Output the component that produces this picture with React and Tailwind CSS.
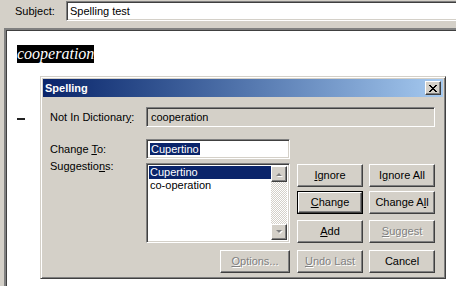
const raised =
  'border border-t-white border-l-white border-r-[#404040] border-b-[#404040] shadow-[inset_-1px_-1px_#808080,inset_1px_1px_#d4d0c8]';
const sunken =
  'border border-t-[#808080] border-l-[#808080] border-r-white border-b-white shadow-[inset_1px_1px_#404040,inset_-1px_-1px_#d4d0c8]';
const dim = 'text-[#808080] [text-shadow:1px_1px_0_#fff]';

function Btn({ children, disabled, isDefault, className = '' }) {
  const face = (
    <div className={`h-full w-full bg-[#d4d0c8] flex items-center justify-center ${raised} ${disabled ? dim : ''}`}>
      {children}
    </div>
  );
  if (isDefault) {
    return <div className={`h-[23px] border border-black ${className}`}>{face}</div>;
  }
  return <div className={`h-[23px] ${className}`}>{face}</div>;
}

function Arrow({ up }) {
  return (
    <div className={`w-[16px] h-[16px] bg-[#d4d0c8] flex items-center justify-center ${raised}`}>
      <svg width="8" height="5" viewBox="0 0 8 5">
        {up ? (
          <>
            <path d="M2 5 L5 2 L8 5 Z" fill="#fff" />
            <path d="M1 4 L4 1 L7 4 Z" fill="#808080" />
          </>
        ) : (
          <>
            <path d="M2 1 L5 4 L8 1 Z" fill="#fff" />
            <path d="M1 0 L4 3 L7 0 Z" fill="#808080" />
          </>
        )}
      </svg>
    </div>
  );
}

function CloseGlyph() {
  const rows = [[0, 2, 6, 2], [1, 2, 5, 2], [2, 4], [3, 2], [2, 4], [1, 2, 5, 2], [0, 2, 6, 2]];
  return (
    <svg width="8" height="7" viewBox="0 0 8 7" shapeRendering="crispEdges">
      {rows.map((r, y) => (
        <g key={y}>
          <rect x={r[0]} y={y} width={r[1]} height="1" fill="#000" />
          {r.length > 2 && <rect x={r[2]} y={y} width={r[3]} height="1" fill="#000" />}
        </g>
      ))}
    </svg>
  );
}

export default function App() {
  return (
    <div className="relative w-[456px] h-[286px] overflow-hidden bg-[#d4d0c8] font-['Liberation_Sans',Arial,sans-serif] text-[11px] text-black leading-[13px]">
      {/* subject bar */}
      <div className="h-[28px] flex items-start pt-[1px]">
        <div className="w-[66px] pl-[15px] h-[20px] flex items-center">Subject:</div>
        <div className={`flex-1 -mr-[4px] h-[20px] bg-white flex items-center pl-[3px] ${sunken}`}>Spelling test</div>
      </div>

      {/* document */}
      <div className="ml-[4px] h-[258px] bg-white border-t-2 border-l-2 border-[#808080] shadow-[inset_1px_1px_#404040]">
        <div className="pl-[11px] pt-[15px]">
          <div className="inline-block bg-black text-white italic font-['Liberation_Serif',serif] text-[16px] leading-[18px] w-[77px]">
            cooperation
          </div>
          <div className="mt-[55px] w-[8px] h-[2px] bg-[#222]" />
        </div>
      </div>

      {/* spelling dialog */}
      <div className="absolute left-[40px] top-[76px] w-[406px] h-[203px] bg-[#d4d0c8] border border-t-[#d4d0c8] border-l-[#d4d0c8] border-r-[#404040] border-b-[#404040] shadow-[inset_1px_1px_#fff,inset_-1px_-1px_#808080] p-[2px]">
        <div className="h-[18px] flex items-center justify-between pl-[2px] pr-[2px] bg-linear-to-r from-[#0a246a] to-[#a6caf0]">
          <span className="text-white font-bold">Spelling</span>
          <div className={`w-[16px] h-[14px] bg-[#d4d0c8] flex items-center justify-center ${raised}`}>
            <CloseGlyph />
          </div>
        </div>

        <div className="pl-[7px] pr-[8px] pt-[10px]">
          <div className="flex items-center">
            <div className="w-[96px]">Not In Dictionar<u>y</u>:</div>
            <div className={`w-[289px] h-[20px] flex items-center pl-[4px] ${sunken}`}>cooperation</div>
          </div>

          <div className="flex items-center mt-[12px]">
            <div className="w-[96px]">Change <u>T</u>o:</div>
            <div className={`w-[144px] h-[20px] bg-white flex items-center pl-[3px] ${sunken}`}>
              <span className="bg-[#0a246a] text-white px-[1px] leading-[12px]">Cupertino</span>
            </div>
          </div>

          <div className="flex mt-[4px]">
            <div className="w-[96px] -mt-[3px]">Suggestio<u>n</u>s:</div>
            <div className={`w-[144px] h-[80px] bg-white p-[2px] flex ${sunken}`}>
              <div className="flex-1">
                <div className="h-[13px] bg-[#0a246a] text-white pl-[1px]">Cupertino</div>
                <div className="h-[13px] pl-[1px]">co-operation</div>
              </div>
              <div className="w-[16px] flex flex-col">
                <Arrow up />
                <div className="flex-1 bg-[repeating-conic-gradient(#ffffff_0_25%,#d4d0c8_0_50%)] bg-size-[2px_2px]" />
                <Arrow />
              </div>
            </div>
            <div className="ml-[7px] mt-[1px] grid grid-cols-[66px_66px] gap-x-[6px]">
              <Btn><span><u>I</u>gnore</span></Btn>
              <Btn><span>I<u>g</u>nore All</span></Btn>
              <Btn isDefault className="mt-[4px]"><span><u>C</u>hange</span></Btn>
              <Btn className="mt-[4px]"><span>Change A<u>l</u>l</span></Btn>
              <Btn className="mt-[5px]"><span><u>A</u>dd</span></Btn>
              <Btn disabled className="mt-[5px]"><span><u>S</u>uggest</span></Btn>
            </div>
          </div>

          <div className="flex justify-end mt-[7px] gap-x-[6px]">
            <Btn disabled className="w-[70px] mr-[1px]"><span><u>O</u>ptions...</span></Btn>
            <Btn disabled className="w-[66px]"><span><u>U</u>ndo Last</span></Btn>
            <Btn className="w-[66px]"><span>Cancel</span></Btn>
          </div>
        </div>
      </div>
    </div>
  );
}
